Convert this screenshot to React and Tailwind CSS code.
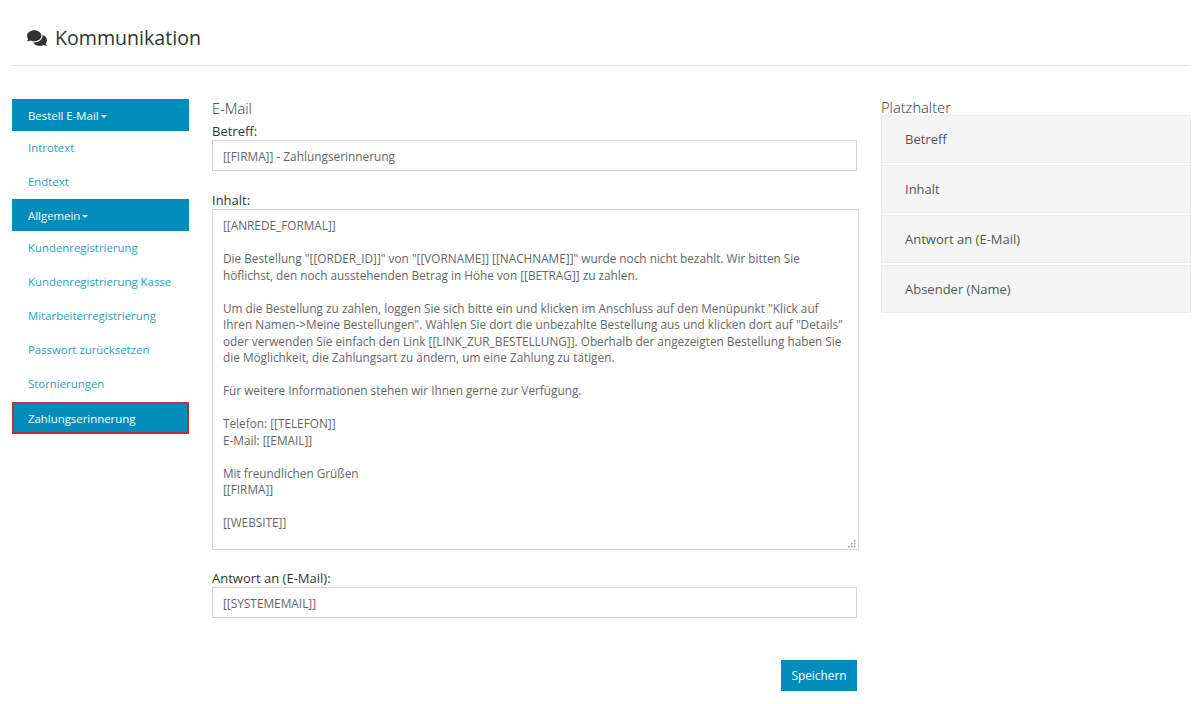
import { FaComments } from 'react-icons/fa';

const menu = [
  { label: 'Bestell E-Mail', header: true },
  { label: 'Introtext' },
  { label: 'Endtext' },
  { label: 'Allgemein', header: true },
  { label: 'Kundenregistrierung' },
  { label: 'Kundenregistrierung Kasse' },
  { label: 'Mitarbeiterregistrierung' },
  { label: 'Passwort zurücksetzen' },
  { label: 'Stornierungen' },
  { label: 'Zahlungserinnerung', active: true },
];

const placeholders = ['Betreff', 'Inhalt', 'Antwort an (E-Mail)', 'Absender (Name)'];

const body = `[[ANREDE_FORMAL]]

Die Bestellung "[[ORDER_ID]]" von "[[VORNAME]] [[NACHNAME]]" wurde noch nicht bezahlt. Wir bitten Sie höflichst, den noch ausstehenden Betrag in Höhe von [[BETRAG]] zu zahlen.

Um die Bestellung zu zahlen, loggen Sie sich bitte ein und klicken im Anschluss auf den Menüpunkt "Klick auf Ihren Namen->Meine Bestellungen". Wählen Sie dort die unbezahlte Bestellung aus und klicken dort auf "Details" oder verwenden Sie einfach den Link [[LINK_ZUR_BESTELLUNG]]. Oberhalb der angezeigten Bestellung haben Sie die Möglichkeit, die Zahlungsart zu ändern, um eine Zahlung zu tätigen.

Für weitere Informationen stehen wir Ihnen gerne zur Verfügung.

Telefon: [[TELEFON]]
E-Mail: [[EMAIL]]

Mit freundlichen Grüßen
[[FIRMA]]

[[WEBSITE]]`;

function MenuItem({ item }) {
  if (item.header || item.active) {
    return (
      <div
        className={`flex h-[32px] items-center pl-4 pt-[2px] text-[11.4px] text-white bg-[#008dbb] ${
          item.active ? 'mt-[1px] border-2 border-[#b5333f]' : ''
        }`}
      >
        <span className={item.active ? 'ml-[-2px]' : ''}>{item.label}</span>
        {item.header && (
          <span className="ml-[2px] mt-[1px] border-x-[3px] border-t-[3px] border-x-transparent border-t-white" />
        )}
      </div>
    );
  }
  return <div className="flex h-[34px] items-center pl-4 text-[11.4px] text-[#2a9fc9]">{item.label}</div>;
}

export default function App() {
  return (
    <div className="h-[704px] overflow-hidden bg-white pl-3 pr-[10px] font-['Open_Sans',sans-serif] text-[#555]">
      <div className="flex h-[66px] items-center gap-[8px] border-b border-[#e4e4e4] pl-[15px] pb-[1px] pt-[12px]">
        <FaComments className="h-[20px] w-[20px] text-[#333]" />
        <h1 className="text-[19.6px] text-[#333]">Kommunikation</h1>
      </div>

      <div className="mt-[33px] flex">
        <div className="w-[177px] shrink-0">
          {menu.map((item) => (
            <MenuItem key={item.label} item={item} />
          ))}
        </div>

        <div className="ml-[23px] w-[647px] shrink-0">
          <h2 className="text-[14.7px] font-light leading-[18px] text-[#333]">E-Mail</h2>
          <label className="mt-[5px] block text-[13px] leading-[18px] text-[#333]">Betreff:</label>
          <input
            readOnly
            value="[[FIRMA]] - Zahlungserinnerung"
            className="block h-[31px] w-[645px] border border-[#d6d6d6] px-[10px] text-[11.85px] text-[#666] outline-none"
          />
          <label className="mt-[20px] block text-[13px] leading-[18px] text-[#333]">Inhalt:</label>
          <div className="relative">
            <textarea
              readOnly
              value={body}
              className="block h-[341px] w-[647px] resize-none border border-[#d6d6d6] px-[10px] pt-[7px] pb-[8px] text-[11.8px] leading-[16.5px] text-[#666] outline-none"
            />
            <svg className="absolute bottom-[2px] right-[3px] h-[8px] w-[8px] text-[#999]" viewBox="0 0 8 8" fill="currentColor">
              <rect x="6" y="0" width="1.5" height="1.5" />
              <rect x="3" y="3" width="1.5" height="1.5" />
              <rect x="6" y="3" width="1.5" height="1.5" />
              <rect x="0" y="6" width="1.5" height="1.5" />
              <rect x="3" y="6" width="1.5" height="1.5" />
              <rect x="6" y="6" width="1.5" height="1.5" />
            </svg>
          </div>
          <label className="mt-[19px] block text-[13px] leading-[18px] text-[#333]">Antwort an (E-Mail):</label>
          <input
            readOnly
            value="[[SYSTEMEMAIL]]"
            className="block h-[31px] w-[645px] border border-[#d6d6d6] px-[10px] text-[11.85px] text-[#666] outline-none"
          />
          <div className="mt-[42px] flex w-[645px] justify-end">
            <button className="h-[31px] w-[76px] bg-[#008dbb] text-[11.85px] text-white">Speichern</button>
          </div>
        </div>

        <div className="ml-[22px] w-[310px] shrink-0">
          <h2 className="pt-[1px] text-[14.7px] font-light leading-[15px] text-[#333]">Platzhalter</h2>
          <div className="flex flex-col gap-[2px]">
            {placeholders.map((p) => (
              <div
                key={p}
                className="flex h-[48px] items-center border border-[#ebebeb] bg-[#f5f5f5] pl-[23px] pt-[2px] text-[13px] text-[#555]"
              >
                {p}
              </div>
            ))}
          </div>
        </div>
      </div>
    </div>
  );
}
